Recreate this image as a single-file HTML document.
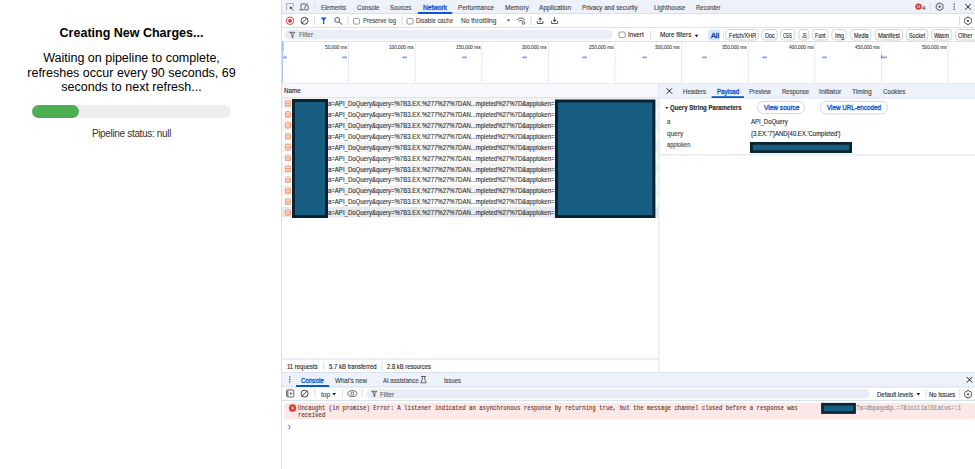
<!DOCTYPE html>
<html><head><meta charset="utf-8">
<style>
*{margin:0;padding:0;box-sizing:border-box}
html,body{width:975px;height:469px;overflow:hidden;background:#fff;font-family:"Liberation Sans",sans-serif}
.a{position:absolute;white-space:nowrap}
.t{position:absolute;white-space:nowrap;line-height:1;transform-origin:0 0;-webkit-text-stroke:0.12px currentColor}
.ov{position:absolute;left:0;top:0}
#page{position:absolute;left:0;top:0;width:263px;height:469px;text-align:center;color:#000}
</style></head><body>
<div id="page">
  <div class="a" style="left:0;width:263px;top:25.8px;font-size:12.5px;font-weight:bold;text-align:center">Creating New Charges...</div>
  <div class="a" style="left:0;width:263px;top:51.1px;font-size:12.5px;line-height:14.5px;text-align:center;white-space:normal">Waiting on pipeline to complete,<br>refreshes occur every 90 seconds, 69<br>seconds to next refresh...</div>
  <div class="a" style="left:32px;top:105px;width:199px;height:13px;background:#eeeeee;border-radius:7px"></div>
  <div class="a" style="left:32px;top:105px;width:47px;height:13px;background:#4caf50;border-radius:7px"></div>
  <div class="a" style="left:0;width:263px;top:127.5px;font-size:10px;letter-spacing:-0.33px;color:#333;text-align:center">Pipeline status: null</div>
</div>
<svg class="ov" width="975" height="469" viewBox="0 0 975 469"><rect x="281" y="0" width="694" height="469" rx="0" fill="#ffffff" /><rect x="281" y="0" width="1" height="469" fill="#d8e1ef"/><rect x="282" y="0" width="693" height="13" rx="0" fill="#edf1f9" /><rect x="282" y="13" width="693" height="1" fill="#d8e1ef"/><rect x="417.8" y="12" width="34.4" height="2" rx="0" fill="#0b57d0" /><rect x="314" y="3" width="1" height="7.5" fill="#d6deea"/><rect x="282" y="27" width="693" height="1" fill="#d8e1ef"/><rect x="314" y="16" width="1" height="9" fill="#d6deea"/><rect x="347.5" y="16" width="1" height="9" fill="#d6deea"/><rect x="401.5" y="16" width="1" height="9" fill="#d6deea"/><rect x="530.5" y="16" width="1" height="9" fill="#d6deea"/><rect x="959" y="16" width="1" height="9" fill="#d6deea"/><rect x="353.5" y="18.5" width="6" height="5.6" rx="1.2" fill="none" stroke="#6e6e6e" stroke-width="0.7"/><rect x="407" y="18.5" width="6" height="5.6" rx="1.2" fill="none" stroke="#6e6e6e" stroke-width="0.7"/><rect x="282" y="41" width="693" height="1" fill="#d8e1ef"/><rect x="284.7" y="29.7" width="328" height="9.8" rx="4.9" fill="#e9eef6" /><rect x="619" y="32" width="6.2" height="5.6" rx="1.2" fill="none" stroke="#6e6e6e" stroke-width="0.7"/><rect x="650" y="31" width="1" height="8" fill="#d6deea"/><rect x="708.2" y="29.5" width="12" height="11" rx="3" fill="#d3e3fd" /><rect x="723" y="31" width="1" height="8" fill="#d6deea"/><rect x="725.8" y="29.5" width="32.60000000000002" height="10.5" rx="3" fill="#ffffff" stroke="#c9ced6" stroke-width="0.9"/><rect x="761.8" y="29.5" width="15.300000000000068" height="10.5" rx="3" fill="#ffffff" stroke="#c9ced6" stroke-width="0.9"/><rect x="780.5" y="29.5" width="14.299999999999955" height="10.5" rx="3" fill="#ffffff" stroke="#c9ced6" stroke-width="0.9"/><rect x="798.9" y="29.5" width="9.899999999999977" height="10.5" rx="3" fill="#ffffff" stroke="#c9ced6" stroke-width="0.9"/><rect x="812.2" y="29.5" width="16.0" height="10.5" rx="3" fill="#ffffff" stroke="#c9ced6" stroke-width="0.9"/><rect x="831.8" y="29.5" width="14.400000000000091" height="10.5" rx="3" fill="#ffffff" stroke="#c9ced6" stroke-width="0.9"/><rect x="850.8" y="29.5" width="20.0" height="10.5" rx="3" fill="#ffffff" stroke="#c9ced6" stroke-width="0.9"/><rect x="875.1" y="29.5" width="27.399999999999977" height="10.5" rx="3" fill="#ffffff" stroke="#c9ced6" stroke-width="0.9"/><rect x="906.2" y="29.5" width="21.59999999999991" height="10.5" rx="3" fill="#ffffff" stroke="#c9ced6" stroke-width="0.9"/><rect x="931.5" y="29.5" width="20.299999999999955" height="10.5" rx="3" fill="#ffffff" stroke="#c9ced6" stroke-width="0.9"/><rect x="955.5" y="29.5" width="39" height="10.5" rx="3" fill="#ffffff" stroke="#c9ced6" stroke-width="0.9"/><rect x="282" y="83" width="693" height="1" fill="#d8e1ef"/><rect x="348.1" y="41" width="1" height="42" fill="#e3eaf6"/><rect x="414.70000000000005" y="41" width="1" height="42" fill="#e3eaf6"/><rect x="481.3" y="41" width="1" height="42" fill="#e3eaf6"/><rect x="547.9" y="41" width="1" height="42" fill="#e3eaf6"/><rect x="614.5" y="41" width="1" height="42" fill="#e3eaf6"/><rect x="681.1" y="41" width="1" height="42" fill="#e3eaf6"/><rect x="747.7" y="41" width="1" height="42" fill="#e3eaf6"/><rect x="814.3" y="41" width="1" height="42" fill="#e3eaf6"/><rect x="880.9" y="41" width="1" height="42" fill="#e3eaf6"/><rect x="947.5" y="41" width="1" height="42" fill="#e3eaf6"/><rect x="282.3" y="56.5" width="4.6" height="1.8" rx="0" fill="#7aa7f5" /><rect x="342.3" y="56.5" width="4.6" height="1.8" rx="0" fill="#7aa7f5" /><rect x="402.3" y="56.5" width="4.6" height="1.8" rx="0" fill="#7aa7f5" /><rect x="462.3" y="56.5" width="4.6" height="1.8" rx="0" fill="#7aa7f5" /><rect x="522.3000000000001" y="56.5" width="4.6" height="1.8" rx="0" fill="#7aa7f5" /><rect x="582.3000000000001" y="56.5" width="4.6" height="1.8" rx="0" fill="#7aa7f5" /><rect x="642.3000000000001" y="56.5" width="4.6" height="1.8" rx="0" fill="#7aa7f5" /><rect x="702.3000000000001" y="56.5" width="4.6" height="1.8" rx="0" fill="#7aa7f5" /><rect x="762.3000000000001" y="56.5" width="4.6" height="1.8" rx="0" fill="#7aa7f5" /><rect x="822.3000000000001" y="56.5" width="4.6" height="1.8" rx="0" fill="#7aa7f5" /><rect x="882.3000000000001" y="56.5" width="4.6" height="1.8" rx="0" fill="#7aa7f5" /><rect x="282" y="41" width="1" height="42" fill="#a8c7fa"/><rect x="281.5" y="42" width="2.5" height="9" rx="1" fill="#a8c7fa" /><rect x="282" y="83.5" width="376.5" height="13.5" rx="0" fill="#f6f8fc" /><rect x="282" y="97" width="376.6" height="1" fill="#d8e1ef"/><rect x="282" y="97.8" width="376.3" height="10.9" rx="0" fill="#f3f3f3" /><rect x="284.9" y="100.2" width="6.1" height="6.6" rx="1.6" fill="#f2a47f" /><rect x="286.1" y="101.3" width="3.7" height="1.3" rx="0.3" fill="#fde9df" /><rect x="286.1" y="103.8" width="3.7" height="1.3" rx="0.3" fill="#fde9df" /><rect x="282" y="108.7" width="376.3" height="10.9" rx="0" fill="#ffffff" /><rect x="284.9" y="111.10000000000001" width="6.1" height="6.6" rx="1.6" fill="#f2a47f" /><rect x="286.1" y="112.2" width="3.7" height="1.3" rx="0.3" fill="#fde9df" /><rect x="286.1" y="114.7" width="3.7" height="1.3" rx="0.3" fill="#fde9df" /><rect x="282" y="119.6" width="376.3" height="10.9" rx="0" fill="#f3f3f3" /><rect x="284.9" y="122.0" width="6.1" height="6.6" rx="1.6" fill="#f2a47f" /><rect x="286.1" y="123.1" width="3.7" height="1.3" rx="0.3" fill="#fde9df" /><rect x="286.1" y="125.6" width="3.7" height="1.3" rx="0.3" fill="#fde9df" /><rect x="282" y="130.5" width="376.3" height="10.9" rx="0" fill="#ffffff" /><rect x="284.9" y="132.9" width="6.1" height="6.6" rx="1.6" fill="#f2a47f" /><rect x="286.1" y="134.0" width="3.7" height="1.3" rx="0.3" fill="#fde9df" /><rect x="286.1" y="136.5" width="3.7" height="1.3" rx="0.3" fill="#fde9df" /><rect x="282" y="141.4" width="376.3" height="10.9" rx="0" fill="#f3f3f3" /><rect x="284.9" y="143.8" width="6.1" height="6.6" rx="1.6" fill="#f2a47f" /><rect x="286.1" y="144.9" width="3.7" height="1.3" rx="0.3" fill="#fde9df" /><rect x="286.1" y="147.4" width="3.7" height="1.3" rx="0.3" fill="#fde9df" /><rect x="282" y="152.3" width="376.3" height="10.9" rx="0" fill="#ffffff" /><rect x="284.9" y="154.70000000000002" width="6.1" height="6.6" rx="1.6" fill="#f2a47f" /><rect x="286.1" y="155.8" width="3.7" height="1.3" rx="0.3" fill="#fde9df" /><rect x="286.1" y="158.3" width="3.7" height="1.3" rx="0.3" fill="#fde9df" /><rect x="282" y="163.2" width="376.3" height="10.9" rx="0" fill="#f3f3f3" /><rect x="284.9" y="165.6" width="6.1" height="6.6" rx="1.6" fill="#f2a47f" /><rect x="286.1" y="166.7" width="3.7" height="1.3" rx="0.3" fill="#fde9df" /><rect x="286.1" y="169.2" width="3.7" height="1.3" rx="0.3" fill="#fde9df" /><rect x="282" y="174.1" width="376.3" height="10.9" rx="0" fill="#ffffff" /><rect x="284.9" y="176.5" width="6.1" height="6.6" rx="1.6" fill="#f2a47f" /><rect x="286.1" y="177.6" width="3.7" height="1.3" rx="0.3" fill="#fde9df" /><rect x="286.1" y="180.1" width="3.7" height="1.3" rx="0.3" fill="#fde9df" /><rect x="282" y="185.0" width="376.3" height="10.9" rx="0" fill="#f3f3f3" /><rect x="284.9" y="187.4" width="6.1" height="6.6" rx="1.6" fill="#f2a47f" /><rect x="286.1" y="188.5" width="3.7" height="1.3" rx="0.3" fill="#fde9df" /><rect x="286.1" y="191.0" width="3.7" height="1.3" rx="0.3" fill="#fde9df" /><rect x="282" y="195.9" width="376.3" height="10.9" rx="0" fill="#ffffff" /><rect x="284.9" y="198.3" width="6.1" height="6.6" rx="1.6" fill="#f2a47f" /><rect x="286.1" y="199.4" width="3.7" height="1.3" rx="0.3" fill="#fde9df" /><rect x="286.1" y="201.9" width="3.7" height="1.3" rx="0.3" fill="#fde9df" /><rect x="282" y="206.8" width="376.3" height="10.6" rx="0" fill="#e5e8ec" /><rect x="284.9" y="209.20000000000002" width="6.1" height="6.6" rx="1.6" fill="#f2a47f" /><rect x="286.1" y="210.3" width="3.7" height="1.3" rx="0.3" fill="#fde9df" /><rect x="286.1" y="212.8" width="3.7" height="1.3" rx="0.3" fill="#fde9df" /><rect x="658.3" y="83" width="1" height="289" fill="#d8e1ef"/><rect x="282" y="358.5" width="376.29999999999995" height="1" fill="#d8e1ef"/><rect x="323.3" y="362" width="1" height="9" fill="#d6deea"/><rect x="381.5" y="362" width="1" height="9" fill="#d6deea"/><rect x="659" y="83.5" width="316" height="14" rx="0" fill="#edf1f9" /><rect x="659" y="97.5" width="316" height="1" fill="#d8e1ef"/><rect x="711.6" y="96.2" width="32.3" height="1.8" rx="0" fill="#0b57d0" /><rect x="757.6" y="101.4" width="47" height="12.1" rx="6" fill="#ffffff" stroke="#c2d3ee" stroke-width="0.9"/><rect x="820.1" y="101.4" width="67.3" height="12.4" rx="6" fill="#ffffff" stroke="#c2d3ee" stroke-width="0.9"/><rect x="659" y="154.3" width="316" height="1" fill="#d8e1ef"/><rect x="282" y="372.3" width="693" height="14.7" rx="0" fill="#edf1f9" /><rect x="282" y="372" width="693" height="1" fill="#d8e1ef"/><rect x="282" y="386.5" width="693" height="1" fill="#d8e1ef"/><rect x="296" y="385" width="33.2" height="2" rx="0" fill="#0b57d0" /><rect x="314.3" y="389" width="1" height="9" fill="#d6deea"/><rect x="342.2" y="389" width="1" height="9" fill="#d6deea"/><rect x="361.4" y="389" width="1" height="9" fill="#d6deea"/><rect x="925.7" y="389" width="1" height="9" fill="#d6deea"/><rect x="959.2" y="389" width="1" height="9" fill="#d6deea"/><rect x="366.2" y="389" width="503.6" height="9.6" rx="4.8" fill="#e9eef6" /><rect x="282" y="400" width="693" height="1" fill="#d8e1ef"/><rect x="284.1" y="402.9" width="691" height="16.4" rx="2.5" fill="#fce8e6" /><circle cx="292.3" cy="408.2" r="3.3" fill="#dc362e"/><rect x="930" y="3" width="1" height="7.5" fill="#d6deea"/></svg><span id="t0" class="t" style="left:320.9px;top:4.88px;font-size:6.5px;color:#474747;font-weight:400;font-family:'Liberation Sans', sans-serif;transform:scaleX(0.9222);">Elements</span><span id="t1" class="t" style="left:356.8px;top:4.88px;font-size:6.5px;color:#474747;font-weight:400;font-family:'Liberation Sans', sans-serif;transform:scaleX(0.9430);">Console</span><span id="t2" class="t" style="left:390.4px;top:4.88px;font-size:6.5px;color:#474747;font-weight:400;font-family:'Liberation Sans', sans-serif;transform:scaleX(0.9011);">Sources</span><span id="t3" class="t" style="left:422.7px;top:4.88px;font-size:6.5px;color:#0b57d0;font-weight:400;font-family:'Liberation Sans', sans-serif;-webkit-text-stroke:0.32px currentColor;transform:scaleX(1.0107);">Network</span><span id="t4" class="t" style="left:457.6px;top:4.88px;font-size:6.5px;color:#474747;font-weight:400;font-family:'Liberation Sans', sans-serif;transform:scaleX(0.9699);">Performance</span><span id="t5" class="t" style="left:504.5px;top:4.88px;font-size:6.5px;color:#474747;font-weight:400;font-family:'Liberation Sans', sans-serif;transform:scaleX(1.0092);">Memory</span><span id="t6" class="t" style="left:539.2px;top:4.88px;font-size:6.5px;color:#474747;font-weight:400;font-family:'Liberation Sans', sans-serif;transform:scaleX(1.0122);">Application</span><span id="t7" class="t" style="left:582.2px;top:4.88px;font-size:6.5px;color:#474747;font-weight:400;font-family:'Liberation Sans', sans-serif;transform:scaleX(0.9575);">Privacy and security</span><span id="t8" class="t" style="left:653.8px;top:4.88px;font-size:6.5px;color:#474747;font-weight:400;font-family:'Liberation Sans', sans-serif;transform:scaleX(0.9807);">Lighthouse</span><span id="t9" class="t" style="left:696px;top:4.88px;font-size:6.5px;color:#474747;font-weight:400;font-family:'Liberation Sans', sans-serif;transform:scaleX(0.9202);">Recorder</span><span id="t10" class="t" style="left:363px;top:18.08px;font-size:6.5px;color:#4a4a4a;font-weight:400;font-family:'Liberation Sans', sans-serif;transform:scaleX(0.9041);">Preserve log</span><span id="t11" class="t" style="left:416.3px;top:18.08px;font-size:6.5px;color:#4a4a4a;font-weight:400;font-family:'Liberation Sans', sans-serif;transform:scaleX(0.9111);">Disable cache</span><span id="t12" class="t" style="left:460.8px;top:18.08px;font-size:6.5px;color:#4a4a4a;font-weight:400;font-family:'Liberation Sans', sans-serif;transform:scaleX(1.0101);">No throttling</span><span id="t13" class="t" style="left:299px;top:32.27px;font-size:6.5px;color:#6a6a6a;font-weight:400;font-family:'Liberation Sans', sans-serif;transform:scaleX(0.9686);">Filter</span><span id="t14" class="t" style="left:628.3px;top:32.27px;font-size:6.5px;color:#1f1f1f;font-weight:400;font-family:'Liberation Sans', sans-serif;transform:scaleX(0.9652);">Invert</span><span id="t15" class="t" style="left:659.7px;top:32.27px;font-size:6.5px;color:#1f1f1f;font-weight:400;font-family:'Liberation Sans', sans-serif;transform:scaleX(0.9734);">More filters</span><span id="t16" class="t" style="left:710.5px;top:32.58px;font-size:6.5px;color:#0a3f99;font-weight:400;font-family:'Liberation Sans', sans-serif;-webkit-text-stroke:0.32px currentColor;transform:scaleX(1.1058);">All</span><span id="t17" class="t" style="left:728.5px;top:32.77px;font-size:6.5px;color:#1f1f1f;font-weight:400;font-family:'Liberation Sans', sans-serif;transform:scaleX(0.8554);">Fetch/XHR</span><span id="t18" class="t" style="left:764.5px;top:32.77px;font-size:6.5px;color:#1f1f1f;font-weight:400;font-family:'Liberation Sans', sans-serif;transform:scaleX(0.8562);">Doc</span><span id="t19" class="t" style="left:783.2px;top:32.77px;font-size:6.5px;color:#1f1f1f;font-weight:400;font-family:'Liberation Sans', sans-serif;transform:scaleX(0.6654);">CSS</span><span id="t20" class="t" style="left:801.6px;top:32.77px;font-size:6.5px;color:#1f1f1f;font-weight:400;font-family:'Liberation Sans', sans-serif;transform:scaleX(0.5926);">JS</span><span id="t21" class="t" style="left:814.9000000000001px;top:32.77px;font-size:6.5px;color:#1f1f1f;font-weight:400;font-family:'Liberation Sans', sans-serif;transform:scaleX(0.8144);">Font</span><span id="t22" class="t" style="left:834.5px;top:32.77px;font-size:6.5px;color:#1f1f1f;font-weight:400;font-family:'Liberation Sans', sans-serif;transform:scaleX(0.8300);">Img</span><span id="t23" class="t" style="left:853.5px;top:32.77px;font-size:6.5px;color:#1f1f1f;font-weight:400;font-family:'Liberation Sans', sans-serif;transform:scaleX(0.8240);">Media</span><span id="t24" class="t" style="left:877.8000000000001px;top:32.77px;font-size:6.5px;color:#1f1f1f;font-weight:400;font-family:'Liberation Sans', sans-serif;transform:scaleX(0.8951);">Manifest</span><span id="t25" class="t" style="left:908.9000000000001px;top:32.77px;font-size:6.5px;color:#1f1f1f;font-weight:400;font-family:'Liberation Sans', sans-serif;transform:scaleX(0.8151);">Socket</span><span id="t26" class="t" style="left:934.2px;top:32.77px;font-size:6.5px;color:#1f1f1f;font-weight:400;font-family:'Liberation Sans', sans-serif;transform:scaleX(0.8192);">Wasm</span><span id="t27" class="t" style="left:958.2px;top:32.77px;font-size:6.5px;color:#1f1f1f;font-weight:400;font-family:'Liberation Sans', sans-serif;transform:scaleX(0.8792);">Other</span><span id="t28" class="t" style="left:324.82000000000005px;top:45.41px;font-size:5.4px;color:#4a4a4a;font-weight:400;font-family:'Liberation Sans', sans-serif;transform:scaleX(0.8772);">50,000 ms</span><span id="t29" class="t" style="left:389.00000000000006px;top:45.41px;font-size:5.4px;color:#4a4a4a;font-weight:400;font-family:'Liberation Sans', sans-serif;transform:scaleX(0.8697);">100,000 ms</span><span id="t30" class="t" style="left:455.6px;top:45.41px;font-size:5.4px;color:#4a4a4a;font-weight:400;font-family:'Liberation Sans', sans-serif;transform:scaleX(0.8697);">150,000 ms</span><span id="t31" class="t" style="left:522.1999999999999px;top:45.41px;font-size:5.4px;color:#4a4a4a;font-weight:400;font-family:'Liberation Sans', sans-serif;transform:scaleX(0.8697);">200,000 ms</span><span id="t32" class="t" style="left:588.8px;top:45.41px;font-size:5.4px;color:#4a4a4a;font-weight:400;font-family:'Liberation Sans', sans-serif;transform:scaleX(0.8697);">250,000 ms</span><span id="t33" class="t" style="left:655.4px;top:45.41px;font-size:5.4px;color:#4a4a4a;font-weight:400;font-family:'Liberation Sans', sans-serif;transform:scaleX(0.8697);">300,000 ms</span><span id="t34" class="t" style="left:722.0px;top:45.41px;font-size:5.4px;color:#4a4a4a;font-weight:400;font-family:'Liberation Sans', sans-serif;transform:scaleX(0.8697);">350,000 ms</span><span id="t35" class="t" style="left:788.5999999999999px;top:45.41px;font-size:5.4px;color:#4a4a4a;font-weight:400;font-family:'Liberation Sans', sans-serif;transform:scaleX(0.8697);">400,000 ms</span><span id="t36" class="t" style="left:855.1999999999999px;top:45.41px;font-size:5.4px;color:#4a4a4a;font-weight:400;font-family:'Liberation Sans', sans-serif;transform:scaleX(0.8697);">450,000 ms</span><span id="t37" class="t" style="left:921.8px;top:45.41px;font-size:5.4px;color:#4a4a4a;font-weight:400;font-family:'Liberation Sans', sans-serif;transform:scaleX(0.8697);">500,000 ms</span><span id="t38" class="t" style="left:284.3px;top:88.38px;font-size:6.5px;color:#1f1f1f;font-weight:400;font-family:'Liberation Sans', sans-serif;transform:scaleX(0.9571);">Name</span><span id="t39" class="t" style="left:328px;top:101.17px;font-size:6.5px;color:#303030;font-weight:400;font-family:'Liberation Sans', sans-serif;transform:scaleX(0.9252);">a=API_DoQuery&amp;query=%7B3.EX.%277%27%7DAN...mpleted%27%7D&amp;apptoken=</span><span id="t40" class="t" style="left:328px;top:112.08px;font-size:6.5px;color:#303030;font-weight:400;font-family:'Liberation Sans', sans-serif;transform:scaleX(0.9252);">a=API_DoQuery&amp;query=%7B3.EX.%277%27%7DAN...mpleted%27%7D&amp;apptoken=</span><span id="t41" class="t" style="left:328px;top:122.97px;font-size:6.5px;color:#303030;font-weight:400;font-family:'Liberation Sans', sans-serif;transform:scaleX(0.9252);">a=API_DoQuery&amp;query=%7B3.EX.%277%27%7DAN...mpleted%27%7D&amp;apptoken=</span><span id="t42" class="t" style="left:328px;top:133.88px;font-size:6.5px;color:#303030;font-weight:400;font-family:'Liberation Sans', sans-serif;transform:scaleX(0.9252);">a=API_DoQuery&amp;query=%7B3.EX.%277%27%7DAN...mpleted%27%7D&amp;apptoken=</span><span id="t43" class="t" style="left:328px;top:144.78px;font-size:6.5px;color:#303030;font-weight:400;font-family:'Liberation Sans', sans-serif;transform:scaleX(0.9252);">a=API_DoQuery&amp;query=%7B3.EX.%277%27%7DAN...mpleted%27%7D&amp;apptoken=</span><span id="t44" class="t" style="left:328px;top:155.68px;font-size:6.5px;color:#303030;font-weight:400;font-family:'Liberation Sans', sans-serif;transform:scaleX(0.9252);">a=API_DoQuery&amp;query=%7B3.EX.%277%27%7DAN...mpleted%27%7D&amp;apptoken=</span><span id="t45" class="t" style="left:328px;top:166.57px;font-size:6.5px;color:#303030;font-weight:400;font-family:'Liberation Sans', sans-serif;transform:scaleX(0.9252);">a=API_DoQuery&amp;query=%7B3.EX.%277%27%7DAN...mpleted%27%7D&amp;apptoken=</span><span id="t46" class="t" style="left:328px;top:177.47px;font-size:6.5px;color:#303030;font-weight:400;font-family:'Liberation Sans', sans-serif;transform:scaleX(0.9252);">a=API_DoQuery&amp;query=%7B3.EX.%277%27%7DAN...mpleted%27%7D&amp;apptoken=</span><span id="t47" class="t" style="left:328px;top:188.38px;font-size:6.5px;color:#303030;font-weight:400;font-family:'Liberation Sans', sans-serif;transform:scaleX(0.9252);">a=API_DoQuery&amp;query=%7B3.EX.%277%27%7DAN...mpleted%27%7D&amp;apptoken=</span><span id="t48" class="t" style="left:328px;top:199.28px;font-size:6.5px;color:#303030;font-weight:400;font-family:'Liberation Sans', sans-serif;transform:scaleX(0.9252);">a=API_DoQuery&amp;query=%7B3.EX.%277%27%7DAN...mpleted%27%7D&amp;apptoken=</span><span id="t49" class="t" style="left:328px;top:210.18px;font-size:6.5px;color:#303030;font-weight:400;font-family:'Liberation Sans', sans-serif;transform:scaleX(0.9252);">a=API_DoQuery&amp;query=%7B3.EX.%277%27%7DAN...mpleted%27%7D&amp;apptoken=</span><span id="t50" class="t" style="left:287.4px;top:364.28px;font-size:6.5px;color:#1f1f1f;font-weight:400;font-family:'Liberation Sans', sans-serif;transform:scaleX(0.9139);">11 requests</span><span id="t51" class="t" style="left:328.9px;top:364.28px;font-size:6.5px;color:#1f1f1f;font-weight:400;font-family:'Liberation Sans', sans-serif;transform:scaleX(0.9212);">5.7 kB transferred</span><span id="t52" class="t" style="left:386.7px;top:364.28px;font-size:6.5px;color:#1f1f1f;font-weight:400;font-family:'Liberation Sans', sans-serif;transform:scaleX(0.8999);">2.8 kB resources</span><span id="t53" class="t" style="left:682.9px;top:89.27px;font-size:6.5px;color:#474747;font-weight:400;font-family:'Liberation Sans', sans-serif;transform:scaleX(0.9358);">Headers</span><span id="t54" class="t" style="left:716.5px;top:89.27px;font-size:6.5px;color:#0b57d0;font-weight:400;font-family:'Liberation Sans', sans-serif;-webkit-text-stroke:0.32px currentColor;transform:scaleX(0.9447);">Payload</span><span id="t55" class="t" style="left:749.4px;top:89.27px;font-size:6.5px;color:#474747;font-weight:400;font-family:'Liberation Sans', sans-serif;transform:scaleX(0.9427);">Preview</span><span id="t56" class="t" style="left:781.8px;top:89.27px;font-size:6.5px;color:#474747;font-weight:400;font-family:'Liberation Sans', sans-serif;transform:scaleX(0.9255);">Response</span><span id="t57" class="t" style="left:819.4px;top:89.27px;font-size:6.5px;color:#474747;font-weight:400;font-family:'Liberation Sans', sans-serif;transform:scaleX(1.0409);">Initiator</span><span id="t58" class="t" style="left:852.4px;top:89.27px;font-size:6.5px;color:#474747;font-weight:400;font-family:'Liberation Sans', sans-serif;transform:scaleX(1.0277);">Timing</span><span id="t59" class="t" style="left:882.6px;top:89.27px;font-size:6.5px;color:#474747;font-weight:400;font-family:'Liberation Sans', sans-serif;transform:scaleX(0.9538);">Cookies</span><span id="t60" class="t" style="left:670px;top:104.88px;font-size:6.5px;color:#1f1f1f;font-weight:700;font-family:'Liberation Sans', sans-serif;transform:scaleX(0.9348);">Query String Parameters</span><span id="t61" class="t" style="left:763.5px;top:105.17px;font-size:6.5px;color:#0b57d0;font-weight:400;font-family:'Liberation Sans', sans-serif;-webkit-text-stroke:0.32px currentColor;transform:scaleX(1.0058);">View source</span><span id="t62" class="t" style="left:826.9px;top:105.17px;font-size:6.5px;color:#0b57d0;font-weight:400;font-family:'Liberation Sans', sans-serif;-webkit-text-stroke:0.32px currentColor;transform:scaleX(0.9644);">View URL-encoded</span><span id="t63" class="t" style="left:666.6px;top:119.27px;font-size:6.5px;color:#474747;font-weight:400;font-family:'Liberation Sans', sans-serif;transform:scaleX(0.9379);">a</span><span id="t64" class="t" style="left:750.6px;top:119.27px;font-size:6.5px;color:#1f1f1f;font-weight:400;font-family:'Liberation Sans', sans-serif;transform:scaleX(0.9125);">API_DoQuery</span><span id="t65" class="t" style="left:666.6px;top:131.17px;font-size:6.5px;color:#474747;font-weight:400;font-family:'Liberation Sans', sans-serif;transform:scaleX(1.0083);">query</span><span id="t66" class="t" style="left:750.6px;top:131.17px;font-size:6.5px;color:#1f1f1f;font-weight:400;font-family:'Liberation Sans', sans-serif;transform:scaleX(0.9137);">{3.EX.'7'}AND{40.EX.'Completed'}</span><span id="t67" class="t" style="left:666.6px;top:142.17px;font-size:6.5px;color:#474747;font-weight:400;font-family:'Liberation Sans', sans-serif;transform:scaleX(0.8748);">apptoken</span><span id="t68" class="t" style="left:301.3px;top:378.18px;font-size:6.5px;color:#0b57d0;font-weight:400;font-family:'Liberation Sans', sans-serif;-webkit-text-stroke:0.32px currentColor;transform:scaleX(0.9514);">Console</span><span id="t69" class="t" style="left:335px;top:377.78px;font-size:6.5px;color:#474747;font-weight:400;font-family:'Liberation Sans', sans-serif;transform:scaleX(0.9579);">What's new</span><span id="t70" class="t" style="left:383px;top:377.78px;font-size:6.5px;color:#474747;font-weight:400;font-family:'Liberation Sans', sans-serif;transform:scaleX(0.9232);">AI assistance</span><span id="t71" class="t" style="left:444.1px;top:377.78px;font-size:6.5px;color:#474747;font-weight:400;font-family:'Liberation Sans', sans-serif;transform:scaleX(0.8991);">Issues</span><span id="t72" class="t" style="left:320.7px;top:391.78px;font-size:6.5px;color:#4a4a4a;font-weight:400;font-family:'Liberation Sans', sans-serif;transform:scaleX(1.0280);">top</span><span id="t73" class="t" style="left:380.4px;top:391.78px;font-size:6.5px;color:#5e5e5e;font-weight:400;font-family:'Liberation Sans', sans-serif;transform:scaleX(0.9756);">Filter</span><span id="t74" class="t" style="left:876.7px;top:391.78px;font-size:6.5px;color:#1f1f1f;font-weight:400;font-family:'Liberation Sans', sans-serif;transform:scaleX(0.9300);">Default levels</span><span id="t75" class="t" style="left:928.9px;top:391.78px;font-size:6.5px;color:#1f1f1f;font-weight:400;font-family:'Liberation Sans', sans-serif;transform:scaleX(0.9098);">No Issues</span><span id="t76" class="t" style="left:298.4px;top:406.39px;font-size:6.4px;color:#5e302b;font-weight:400;font-family:'Liberation Mono', monospace;-webkit-text-stroke:0.1px currentColor;transform:scaleX(0.8923);">Uncaught (in promise) Error: A listener indicated an asynchronous response by returning true, but the message channel closed before a response was</span><span id="t77" class="t" style="left:298.4px;top:413.19px;font-size:6.4px;color:#5e302b;font-weight:400;font-family:'Liberation Mono', monospace;-webkit-text-stroke:0.1px currentColor;transform:scaleX(0.8929);">received</span><span id="t78" class="t" style="left:856px;top:406.39px;font-size:6.4px;color:#8a8a8a;font-weight:400;font-family:'Liberation Mono', monospace;-webkit-text-stroke:0.1px currentColor;transform:scaleX(0.8848);">?a=dbpage&amp;p…=7&amp;initialStatus=:1</span><span id="t79" class="t" style="left:922.3px;top:4.80px;font-size:6px;color:#474747;font-weight:400;font-family:'Liberation Sans', sans-serif;transform:scaleX(1.0467);">4</span><svg class="ov" width="975" height="469" viewBox="0 0 975 469"><rect x="881" y="55.3" width="1.3" height="3.2" fill="#4a86e8"/><rect x="292" y="99" width="36" height="119" fill="#0b2331"/><rect x="295" y="102" width="30" height="113" fill="#185e82"/><rect x="555" y="99.5" width="100.39999999999998" height="118.5" fill="#0b2331"/><rect x="558" y="102.5" width="94.39999999999998" height="112.5" fill="#185e82"/><rect x="750" y="142" width="102" height="11" fill="#0b2331"/><rect x="752.8" y="144.8" width="96.4" height="5.4" fill="#185e82"/><rect x="821.1" y="402.9" width="34.799999999999955" height="11.0" fill="#0b2331"/><rect x="823.7" y="405.5" width="29.599999999999955" height="5.8" fill="#185e82"/><path d="M286.6,10L286.6,3.5L293.3,3.5L293.3,6.3" fill="none" stroke="#9a9a9a" stroke-width="0.8" stroke-linecap="round" stroke-linejoin="round" /><path d="M289.6,6.6L292.6,7.4L291.4,8.2L290.4,9.4Z" fill="#3c3c3c"/><path d="M290.8,7.8L293.4,10.2" fill="none" stroke="#474747" stroke-width="0.8" stroke-linecap="round" stroke-linejoin="round" /><path d="M301,9.5L301,4L307.5,4" fill="none" stroke="#474747" stroke-width="0.8" stroke-linecap="round" stroke-linejoin="round" /><path d="M300,9.8L304,9.8" fill="none" stroke="#474747" stroke-width="0.9" stroke-linecap="round" stroke-linejoin="round" /><rect x="305" y="5.5" width="3.3" height="4.5" rx="0.8" fill="none" stroke="#474747" stroke-width="0.8"/><circle cx="918.5" cy="6.6" r="3.2" fill="#dc362e"/><path d="M917.3,5.3999999999999995L919.7,7.8M919.7,5.3999999999999995L917.3,7.8" fill="none" stroke="#ffffff" stroke-width="0.8" stroke-linecap="round" stroke-linejoin="round" /><polygon points="939.60,3.00 940.56,3.13 941.12,4.06 942.22,4.08 942.80,4.85 943.17,5.74 942.65,6.70 943.17,7.66 942.80,8.55 942.22,9.32 941.12,9.34 940.56,10.27 939.60,10.40 938.64,10.27 938.08,9.34 936.98,9.32 936.40,8.55 936.03,7.66 936.55,6.70 936.03,5.74 936.40,4.85 936.98,4.08 938.08,4.06 938.64,3.13" fill="none" stroke="#474747" stroke-width="1.0" stroke-linejoin="round"/><circle cx="939.6" cy="6.7" r="1.15" fill="#474747"/><circle cx="954.2" cy="4.3" r="0.75" fill="#474747"/><circle cx="954.2" cy="6.8" r="0.75" fill="#474747"/><circle cx="954.2" cy="9.3" r="0.75" fill="#474747"/><path d="M965.4,4.199999999999999L970.6,9.4M970.6,4.199999999999999L965.4,9.4" fill="none" stroke="#1f1f1f" stroke-width="1.0" stroke-linecap="round" stroke-linejoin="round" /><circle cx="290" cy="20.8" r="3.7" fill="none" stroke="#dc362e" stroke-width="0.9"/><circle cx="290" cy="20.8" r="1.9" fill="#dc362e"/><circle cx="304.5" cy="20.8" r="3.5" fill="none" stroke="#474747" stroke-width="1.0"/><path d="M302.05,23.25L306.95,18.35" fill="none" stroke="#474747" stroke-width="1.0" stroke-linecap="round" stroke-linejoin="round" /><path d="M320.6,17.6L326.70000000000005,17.6L324.26000000000005,20.246000000000002L324.26000000000005,23.900000000000002L323.04,23.900000000000002L323.04,20.246000000000002Z" fill="#0b57d0"/><circle cx="337.2" cy="19.9" r="2.4" fill="none" stroke="#474747" stroke-width="0.9"/><path d="M339,21.8L341.8,24.3" fill="none" stroke="#474747" stroke-width="1.0" stroke-linecap="round" stroke-linejoin="round" /><path d="M506.8,19.4L510.2,19.4L508.5,21.4Z" fill="#474747"/><path d="M517.3,19.6Q521,16 524.7,19.6M518.8,21Q521,19 523.2,21" fill="none" stroke="#474747" stroke-width="0.8" stroke-linecap="round" stroke-linejoin="round" /><circle cx="523.5" cy="23" r="1.3" fill="none" stroke="#474747" stroke-width="0.8"/><path d="M537.4,21.3L537.4,23.5L543,23.5L543,21.3" fill="none" stroke="#474747" stroke-width="0.9" stroke-linecap="round" stroke-linejoin="round" /><path d="M540.2,17.2L542.3,19.6L538.1,19.6Z" fill="#474747"/><path d="M540.2,19.3L540.2,22" fill="none" stroke="#474747" stroke-width="0.8" stroke-linecap="round" stroke-linejoin="round" /><path d="M551.6,21.3L551.6,23.5L557.6,23.5L557.6,21.3" fill="none" stroke="#474747" stroke-width="0.9" stroke-linecap="round" stroke-linejoin="round" /><path d="M554.6,22.2L556.7,19.8L552.5,19.8Z" fill="#474747"/><path d="M554.6,17.3L554.6,20.2" fill="none" stroke="#474747" stroke-width="0.8" stroke-linecap="round" stroke-linejoin="round" /><polygon points="968.00,17.10 968.96,17.23 969.52,18.16 970.62,18.18 971.20,18.95 971.57,19.84 971.05,20.80 971.57,21.76 971.20,22.65 970.62,23.42 969.52,23.44 968.96,24.37 968.00,24.50 967.04,24.37 966.48,23.44 965.38,23.42 964.80,22.65 964.43,21.76 964.95,20.80 964.43,19.84 964.80,18.95 965.38,18.18 966.48,18.16 967.04,17.23" fill="none" stroke="#474747" stroke-width="1.0" stroke-linejoin="round"/><circle cx="968" cy="20.8" r="1.15" fill="#474747"/><path d="M290,32.3L295,32.3L293.0,34.4L293.0,37.3L292.0,37.3L292.0,34.4Z" fill="none" stroke="#474747" stroke-width="0.8" stroke-linecap="round" stroke-linejoin="round" /><path d="M694.7,34.7L698.5,34.7L696.6,37.3Z" fill="#1f1f1f"/><path d="M667.0,88.6L671.8,93.4M671.8,88.6L667.0,93.4" fill="none" stroke="#1f1f1f" stroke-width="1.0" stroke-linecap="round" stroke-linejoin="round" /><path d="M665.1999999999999,106.9L668.4,106.9L666.8,109.1Z" fill="#1f1f1f"/><circle cx="289.8" cy="377.1" r="0.75" fill="#474747"/><circle cx="289.8" cy="379.6" r="0.75" fill="#474747"/><circle cx="289.8" cy="382.1" r="0.75" fill="#474747"/><path d="M421.5,376.5L425.5,376.5M422.3,376.5L422.3,379L420.8,382.8L426.3,382.8L424.7,379L424.7,376.5" fill="none" stroke="#474747" stroke-width="0.8" stroke-linecap="round" stroke-linejoin="round" /><path d="M967.0,377.3L972.0,382.3M972.0,377.3L967.0,382.3" fill="none" stroke="#1f1f1f" stroke-width="1.0" stroke-linecap="round" stroke-linejoin="round" /><rect x="286.6" y="389.9" width="7.2" height="7" rx="1" fill="none" stroke="#474747" stroke-width="0.85"/><rect x="287" y="390.3" width="1.5" height="6.2" fill="#8a8a8a"/><path d="M290.3,391.9L292.5,393.4L290.3,394.9Z" fill="#474747"/><circle cx="304.6" cy="393.6" r="3.5" fill="none" stroke="#474747" stroke-width="1.0"/><path d="M302.15000000000003,396.05L307.05,391.15000000000003" fill="none" stroke="#474747" stroke-width="1.0" stroke-linecap="round" stroke-linejoin="round" /><path d="M332.3,392.9L336.09999999999997,392.9L334.2,395.5Z" fill="#1f1f1f"/><ellipse cx="352.4" cy="393.6" rx="4.5" ry="2.9" fill="none" stroke="#474747" stroke-width="0.85"/><circle cx="352.4" cy="393.6" r="1.5" fill="none" stroke="#474747" stroke-width="0.8"/><path d="M372,391.3L376.8,391.3L374.88,393.40000000000003L374.88,396.3L373.92,396.3L373.92,393.40000000000003Z" fill="none" stroke="#474747" stroke-width="0.8" stroke-linecap="round" stroke-linejoin="round" /><path d="M916.4,393.0L920.1999999999999,393.0L918.3,395.6Z" fill="#1f1f1f"/><polygon points="968.10,390.60 969.06,390.73 969.62,391.66 970.72,391.68 971.30,392.45 971.67,393.34 971.15,394.30 971.67,395.26 971.30,396.15 970.72,396.92 969.62,396.94 969.06,397.87 968.10,398.00 967.14,397.87 966.58,396.94 965.48,396.92 964.90,396.15 964.53,395.26 965.05,394.30 964.53,393.34 964.90,392.45 965.48,391.68 966.58,391.66 967.14,390.73" fill="none" stroke="#474747" stroke-width="1.0" stroke-linejoin="round"/><circle cx="968.1" cy="394.3" r="1.15" fill="#474747"/><circle cx="292.6" cy="407.9" r="3.6" fill="#dc362e"/><path d="M291.3,406.59999999999997L293.90000000000003,409.2M293.90000000000003,406.59999999999997L291.3,409.2" fill="none" stroke="#ffffff" stroke-width="0.8" stroke-linecap="round" stroke-linejoin="round" /><path d="M288.6,425L290.2,427L288.6,429" fill="none" stroke="#0b57d0" stroke-width="0.9" stroke-linecap="round" stroke-linejoin="round" /></svg></body></html>
